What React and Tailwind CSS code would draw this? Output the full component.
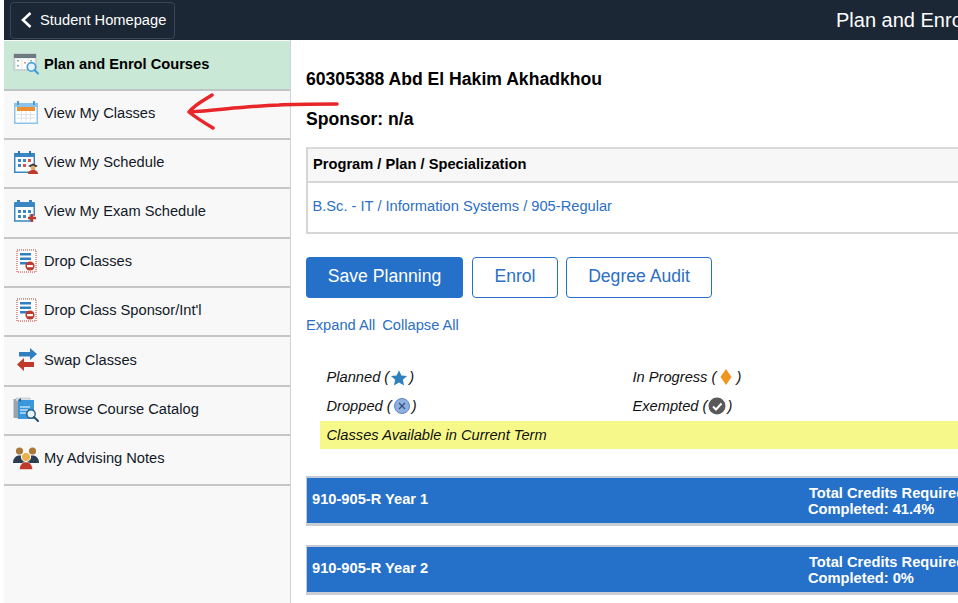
import React from "react";

const PlanIcon = () => (
  <svg width="26" height="22" viewBox="0 0 26 22">
    <rect x="1" y="1" width="22" height="16" fill="#e8edf0" stroke="#b8c0c4" />
    <rect x="1" y="1" width="22" height="4" fill="#6d7a80" />
    <g fill="#fff">
      <rect x="3" y="6" width="5" height="10" />
      <rect x="9.5" y="6" width="5" height="10" />
      <rect x="16" y="6" width="5" height="10" />
    </g>
    <g fill="#7fb98f">
      <rect x="4" y="7" width="2" height="1.5" />
      <rect x="4" y="12" width="2" height="1.5" />
      <rect x="17" y="7" width="2" height="1.5" />
    </g>
    <rect x="11" y="9" width="2" height="1.5" fill="#e0908a" />
    <circle cx="18.5" cy="14" r="4.2" fill="#e3f2fb" stroke="#3f9ad6" strokeWidth="1.6" />
    <path d="M21.5 17l3.5 3.5" stroke="#3f9ad6" strokeWidth="2" strokeLinecap="round" />
  </svg>
);

const ClassesIcon = () => (
  <svg width="24" height="23" viewBox="0 0 24 23">
    <rect x="0.75" y="2.75" width="22.5" height="19.5" fill="#fff" stroke="#8cc3ea" strokeWidth="1.5" />
    <rect x="1" y="3" width="22" height="3" fill="#8cc3ea" />
    <rect x="3" y="0" width="2" height="4" fill="#4a9bd6" />
    <rect x="19" y="0" width="2" height="4" fill="#4a9bd6" />
    <rect x="3" y="6" width="18" height="4" fill="#ee8f2e" />
    <path d="M3 13.5h18M3 17h18M7.5 10v10M12 10v10M16.5 10v10" stroke="#dde3e6" />
  </svg>
);

const ScheduleIcon = () => (
  <svg width="25" height="23" viewBox="0 0 25 23">
    <rect x="0.75" y="2.75" width="19.5" height="18.5" fill="#fff" stroke="#3b87c4" strokeWidth="1.5" />
    <rect x="1" y="2" width="19" height="4" fill="#3b87c4" />
    <rect x="4" y="0" width="2" height="4" fill="#2f75ad" />
    <rect x="15" y="0" width="2" height="4" fill="#2f75ad" />
    <g fill="#3b87c4">
      <rect x="4" y="8" width="3" height="3" />
      <rect x="9" y="8" width="3" height="3" />
      <rect x="4" y="13" width="3" height="3" />
    </g>
    <rect x="14" y="8" width="3" height="3" fill="#d9534a" />
    <rect x="9" y="13" width="3" height="3" fill="#d9534a" />
    <path d="M14 15l5-2.5 5 2.5-5 2z" fill="#333" />
    <circle cx="19" cy="17" r="2.4" fill="#e0a96d" />
    <path d="M14 23c0-3 2.4-4 5-4s5 1 5 4z" fill="#c0392b" />
  </svg>
);

const ExamIcon = () => (
  <svg width="24" height="23" viewBox="0 0 24 23">
    <path d="M0.75 3h19.5v12h-4v6H0.75z" fill="#fff" stroke="#3b87c4" strokeWidth="1.5" />
    <rect x="1" y="2" width="19" height="5" fill="#3b87c4" />
    <rect x="3" y="0" width="3" height="4" fill="#3b87c4" />
    <rect x="15" y="0" width="3" height="4" fill="#3b87c4" />
    <g fill="#3b87c4">
      <rect x="4" y="10" width="3" height="3" />
      <rect x="9" y="10" width="3" height="3" />
      <rect x="14" y="10" width="3" height="3" />
      <rect x="4" y="15" width="3" height="3" />
      <rect x="9" y="15" width="3" height="3" />
    </g>
    <path d="M18 14v8M14 18h8" stroke="#c0392b" strokeWidth="2.4" />
  </svg>
);

const DropIcon = () => (
  <svg width="21" height="24" viewBox="0 0 21 24">
    <rect x="1" y="1" width="19" height="22" fill="#fff" stroke="#c0392b" strokeDasharray="1 1" />
    <g fill="#2f7fc1">
      <rect x="4" y="4" width="11" height="2.5" />
      <rect x="4" y="8.5" width="11" height="2.5" />
      <rect x="4" y="13" width="8" height="2.5" />
    </g>
    <circle cx="14" cy="17" r="4.6" fill="#c0392b" />
    <rect x="11" y="16" width="6" height="2.2" fill="#fff" />
  </svg>
);

const SwapIcon = () => (
  <svg width="21" height="23" viewBox="0 0 21 23">
    <path d="M3 4h11V0l7 6-7 6V8.500H3z" fill="#2f7fc1" />
    <path d="M18 14H8v-4l-7 6.500L8 23v-4h10z" fill="#c0392b" />
  </svg>
);

const BrowseIcon = () => (
  <svg width="26" height="25" viewBox="0 0 26 25">
    <rect x="0.5" y="2" width="6" height="19" fill="#9aa5ab" />
    <path d="M3 1h14v3H3z" fill="#d9dee1" stroke="#aab2b7" strokeWidth="0.5" />
    <path d="M5 3h16v19H5z" fill="#3a97dc" />
    <path d="M5 3l3 -2v4z" fill="#2b5f8a" />
    <path d="M7 10h10M7 13h8M7 16h6" stroke="#fff" strokeWidth="1.2" />
    <circle cx="18" cy="17" r="4.2" fill="#e8f4fc" stroke="#24506f" strokeWidth="1.3" />
    <path d="M21 20l4 4" stroke="#24506f" strokeWidth="2" strokeLinecap="round" />
  </svg>
);

const AdvisingIcon = () => (
  <svg width="26" height="23" viewBox="0 0 26 23">
    <circle cx="6.5" cy="4" r="3.6" fill="#a97a3a" />
    <circle cx="19.5" cy="4" r="3.6" fill="#a97a3a" />
    <path d="M0 16c0-5 3-7.500 6.500-7.500S13 11 13 16z" fill="#2c3f52" />
    <path d="M13 16c0-5 3-7.500 6.500-7.500S26 11 26 16z" fill="#2c3f52" />
    <circle cx="13" cy="10" r="4.600" fill="#e8b34c" stroke="#fff" />
    <path d="M6.500 22.500c0-5 3-7.500 6.500-7.500s6.500 2.500 6.500 7.500z" fill="#c0392b" stroke="#fff" strokeWidth="0.5" />
  </svg>
);

const menu = [
  { label: "View My Classes", icon: <ClassesIcon /> },
  { label: "View My Schedule", icon: <ScheduleIcon /> },
  { label: "View My Exam Schedule", icon: <ExamIcon /> },
  { label: "Drop Classes", icon: <DropIcon /> },
  { label: "Drop Class Sponsor/Int'l", icon: <DropIcon /> },
  { label: "Swap Classes", icon: <SwapIcon /> },
  { label: "Browse Course Catalog", icon: <BrowseIcon /> },
  { label: "My Advising Notes", icon: <AdvisingIcon /> },
];

const Sidebar = () => (
  <div className="w-[287px] shrink-0 bg-[#f8f8f8] border-r border-[#ccd3da] pt-[1px]">
    <div className="h-[49.5px] flex items-center bg-[#c9e8d6] border-b-2 border-[#bfc5c4] pb-[1px]">
      <div className="w-[40px] pl-[9px] shrink-0 flex"><PlanIcon /></div>
      <span className="font-bold text-[14.67px] text-black">Plan and Enrol Courses</span>
    </div>
    {menu.map((item) => (
      <div key={item.label} className="h-[49.4px] flex items-center border-b-2 border-[#c4c6c8] pb-[3px]">
        <div className="w-[40px] pl-[4px] shrink-0 flex justify-center">{item.icon}</div>
        <span className="text-[14.67px] text-[#111827]">{item.label}</span>
      </div>
    ))}
  </div>
);

const YearBar = ({ name, completed }) => (
  <div className="h-[50px] w-[760px] flex items-center justify-between bg-[#2570c9] border-t-2 border-b-[3px] border-l border-t-[#c3cad3] border-b-[#c9ced4] border-l-[#c3cad3] text-white font-bold text-[14.67px] leading-[16px]">
    <span className="pl-[5px] pb-[4px]">{name}</span>
    <div className="w-[258px] shrink-0 whitespace-nowrap">
      <div className="pl-[1px]">Total Credits Required</div>
      <div>Completed: {completed}</div>
    </div>
  </div>
);

const Legend = ({ label, icon }) => (
  <span className="italic text-[14.67px] text-[#111] flex items-center gap-[1px]">
    {label} ({icon})
  </span>
);

const Main = () => (
  <div className="flex-1 min-w-0 overflow-hidden bg-white pl-[15px] pt-[28px]">
    <div className="font-bold text-[17.6px] leading-[22px] text-black">60305388 Abd El Hakim Akhadkhou</div>
    <div className="font-bold text-[17.6px] leading-[22px] text-black mt-[18px]">Sponsor: n/a</div>

    <div className="w-[760px] mt-[17px] border-2 border-[#d4d6d8] border-t-[#d9dadc] h-[87px]">
      <div className="h-[34px] bg-[#f7f7f7] border-b-2 border-[#d4d6d8] flex items-center pl-[5px] pb-[2px] font-bold text-[14.67px] text-black">
        Program / Plan / Specialization
      </div>
      <div className="pl-[4.5px] pt-[14px] text-[14.67px] leading-[18px] text-[#2c6fc4]">
        B.Sc. - IT / Information Systems / 905-Regular
      </div>
    </div>

    <div className="flex mt-[23px]">
      <button className="w-[157px] h-[41px] pb-[2px] rounded-[4px] bg-[#2570c9] text-white text-[17.6px]">Save Planning</button>
      <button className="w-[86px] h-[41px] pb-[2px] ml-[9px] rounded-[4px] bg-white border border-[#2570c9] text-[#2c6fc4] text-[17.6px]">Enrol</button>
      <button className="w-[146px] h-[41px] pb-[2px] ml-[8px] rounded-[4px] bg-white border border-[#2570c9] text-[#2c6fc4] text-[17.6px]">Degree Audit</button>
    </div>

    <div className="flex gap-[7px] mt-[18px] text-[14.67px] leading-[18px] text-[#2c6fc4]">
      <span>Expand All</span>
      <span>Collapse All</span>
    </div>

    <div className="w-[638px] ml-[14px] mt-[28px]">
      <div className="grid grid-cols-[306px_1fr] h-[29px] pl-[6.5px] items-center">
        <Legend
          label="Planned"
          icon={
            <svg width="18" height="18" viewBox="0 0 24 24" className="translate-y-[1px]">
              <path d="M12 1.500l3.200 7 7.600.8-5.700 5.100 1.700 7.500L12 18.100l-6.800 3.800 1.700-7.500L1.200 9.300l7.600-.8z" fill="#2f81bd" />
            </svg>
          }
        />
        <Legend
          label="In Progress"
          icon={
            <svg width="18" height="18" viewBox="0 0 18 18">
              <path d="M9 1l5.500 8L9 17 3.500 9z" fill="#f0961e" />
            </svg>
          }
        />
      </div>
      <div className="grid grid-cols-[306px_1fr] h-[29px] pl-[6.5px] items-center">
        <Legend
          label="Dropped"
          icon={
            <svg width="18" height="18" viewBox="0 0 18 18">
              <circle cx="9" cy="9" r="7.500" fill="#8fb0e0" stroke="#5f86bd" />
              <path d="M6 6l6 6M12 6l-6 6" stroke="#33527f" strokeWidth="1.300" />
            </svg>
          }
        />
        <Legend
          label="Exempted"
          icon={
            <svg width="18" height="18" viewBox="0 0 18 18">
              <circle cx="9" cy="9" r="8.500" fill="#595959" />
              <path d="M5 9.500l3 3 5.500-6" stroke="#fff" strokeWidth="2" fill="none" />
            </svg>
          }
        />
      </div>
      <div className="h-[28px] mt-[1px] bg-[#f6f98a] flex items-center pl-[6.5px] italic text-[14.67px] text-[#111]">
        Classes Available in Current Term
      </div>
    </div>

    <div className="mt-[27px]">
      <YearBar name="910-905-R Year 1" completed="41.4%" />
    </div>
    <div className="mt-[19px]">
      <YearBar name="910-905-R Year 2" completed="0%" />
    </div>
  </div>
);

const App = () => {
  return (
    <div className="relative w-[958px] h-[603px] overflow-hidden bg-white pl-[4px] flex flex-col font-['Liberation_Sans',Arial,sans-serif]">
      <div className="h-[40px] shrink-0 bg-[#1c2735] flex items-center">
        <div className="ml-[6px] w-[165px] h-[37px] shrink-0 rounded-[4px] border border-[#3b4656] flex items-center text-white text-[14.67px] whitespace-nowrap">
          <svg width="14" height="18" viewBox="0 0 14 18" className="ml-[9px] mr-[6px] shrink-0">
            <path d="M10.500 2L3 9l7.500 7" stroke="#fff" strokeWidth="2.600" fill="none" />
          </svg>
          Student Homepage
        </div>
        <div className="ml-[661px] text-white text-[20px] whitespace-nowrap">Plan and Enrol Courses</div>
      </div>
      <div className="flex flex-1 min-h-0">
        <Sidebar />
        <Main />
      </div>
      {/* red pen mark drawn over the screenshot */}
      <svg width="160" height="44" viewBox="0 0 160 44" className="absolute left-[184px] top-[92px]">
        <path
          d="M28 3C20 8 10 13 5 20c6 5 14 10 24 16M5 20c30-2 60-6 90-7 14-1 34-1 58-1"
          stroke="#e8262a"
          strokeWidth="3.500"
          fill="none"
          strokeLinecap="round"
          strokeLinejoin="round"
        />
      </svg>
    </div>
  );
};

export default App;
